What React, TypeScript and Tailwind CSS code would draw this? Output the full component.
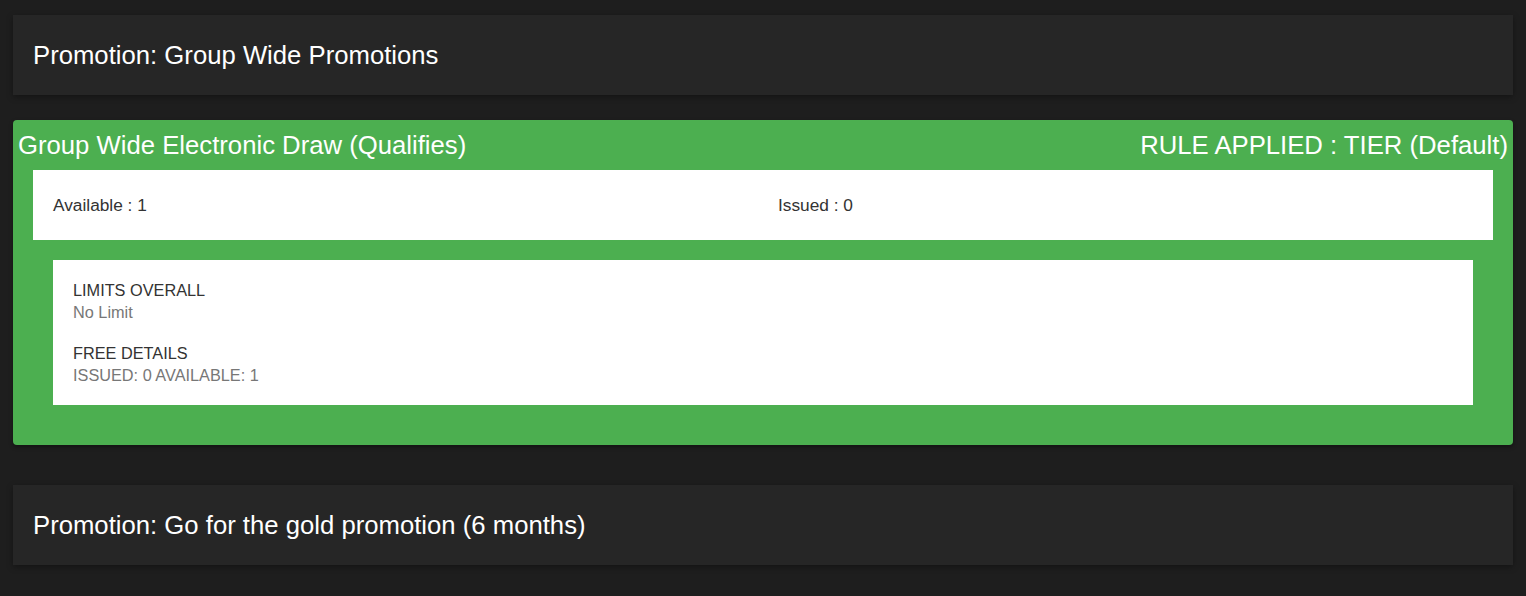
const PROMOS = {
  first: 'Promotion: Group Wide Promotions',
  last: 'Promotion: Go for the gold promotion (6 months)',
};

function PromoHeader({ title }: { title: string }) {
  return (
    <div className="h-[80px] flex items-center bg-[#262626] px-5 pt-[2px] shadow-[0_2px_6px_rgba(0,0,0,0.35)]">
      <h2 className="text-[25.7px] leading-none text-white">{title}</h2>
    </div>
  );
}

function Detail({ label, value }: { label: string; value: string }) {
  return (
    <div>
      <div className="text-[16.3px] leading-[22px] text-[#333]">{label}</div>
      <div className="text-[16.3px] leading-[22px] text-[#777]">{value}</div>
    </div>
  );
}

export default function App() {
  return (
    <div
      className="min-h-[596px] bg-[#1e1e1e] px-[13px] pt-[15px] pb-[31px]"
      style={{ fontFamily: '"Liberation Sans", Arial, sans-serif' }}
    >
      <PromoHeader title={PROMOS.first} />

      {/* ── Draw card ── */}
      <div className="mt-[25px] rounded-[4px] bg-[#4caf50] px-[5px] pb-[40px] shadow-[0_2px_4px_rgba(0,0,0,0.4)]">
        <div className="flex h-[50px] items-center justify-between pt-[2px] text-[25.7px] leading-none text-white">
          <span>Group Wide Electronic Draw (Qualifies)</span>
          <span>RULE APPLIED : TIER (Default)</span>
        </div>

        <div className="mx-[15px] grid h-[70px] grid-cols-2 items-center gap-[30px] bg-white px-5 pt-[2px] text-[17.3px] text-[#333]">
          <span>Available : 1</span>
          <span>Issued : 0</span>
        </div>

        <div className="mx-[35px] mt-5 flex flex-col gap-[19px] bg-white px-5 pt-[19px] pb-[19px]">
          <Detail label="LIMITS OVERALL" value="No Limit" />
          <Detail label="FREE DETAILS" value="ISSUED: 0 AVAILABLE: 1" />
        </div>
      </div>

      <div className="mt-[40px]">
        <PromoHeader title={PROMOS.last} />
      </div>
    </div>
  );
}
